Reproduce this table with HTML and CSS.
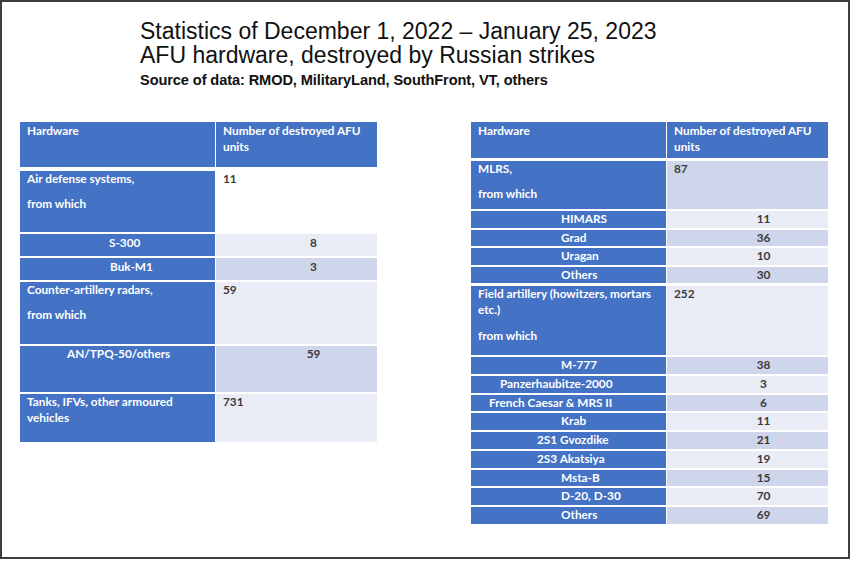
FILE: index.html
```html
<!DOCTYPE html>
<html lang="en">
<head>
<meta charset="utf-8">
<title>AFU hardware statistics</title>
<link rel="stylesheet" href="styles.css">
</head>
<body>
<div class="frame">
  <header class="title">
    <div class="t1">Statistics of December 1, 2022 – January 25, 2023</div>
    <div class="t1">AFU hardware, destroyed by Russian strikes</div>
    <div class="t3">Source of data: RMOD, MilitaryLand, SouthFront, VT, others</div>
  </header>
  <div class="tables">
    <div class="tbl">
      <div class="row head h45">
        <div class="c1">Hardware</div>
        <div class="c2">Number of destroyed AFU<br>units</div>
      </div>
      <div class="row mt4 h61">
        <div class="c1"><p>Air defense systems,</p><p class="para">from which</p></div>
        <div class="c2 white">11</div>
      </div>
      <div class="row h22">
        <div class="c1 sub pad89">S-300</div>
        <div class="c2 light num-l">8</div>
      </div>
      <div class="row h22">
        <div class="c1 sub pad90">Buk-M1</div>
        <div class="c2 dark num-l">3</div>
      </div>
      <div class="row h62">
        <div class="c1"><p>Counter-artillery radars,</p><p class="para">from which</p></div>
        <div class="c2 light">59</div>
      </div>
      <div class="row h46">
        <div class="c1 sub pad47">AN/TPQ-50/others</div>
        <div class="c2 dark num-l">59</div>
      </div>
      <div class="row h48">
        <div class="c1">Tanks, IFVs, other armoured<br>vehicles</div>
        <div class="c2 light">731</div>
      </div>
    </div>

    <div class="tbl">
      <div class="row head h36">
        <div class="c1">Hardware</div>
        <div class="c2">Number of destroyed AFU<br>units</div>
      </div>
      <div class="row mt3 h48">
        <div class="c1"><p>MLRS,</p><p class="para">from which</p></div>
        <div class="c2 dark">87</div>
      </div>
      <div class="row hs">
        <div class="c1 sub pad90">HIMARS</div>
        <div class="c2 light num-r">11</div>
      </div>
      <div class="row hs">
        <div class="c1 sub pad90">Grad</div>
        <div class="c2 dark num-r">36</div>
      </div>
      <div class="row hs">
        <div class="c1 sub pad90">Uragan</div>
        <div class="c2 light num-r">10</div>
      </div>
      <div class="row hs">
        <div class="c1 sub pad90">Others</div>
        <div class="c2 dark num-r">30</div>
      </div>
      <div class="row mt3 h69">
        <div class="c1"><p>Field artillery (howitzers, mortars<br>etc.)</p><p class="para wide">from which</p></div>
        <div class="c2 light">252</div>
      </div>
      <div class="row ht">
        <div class="c1 sub pad90">M-777</div>
        <div class="c2 dark num-r">38</div>
      </div>
      <div class="row ht">
        <div class="c1 sub pad29">Panzerhaubitze-2000</div>
        <div class="c2 light num-r">3</div>
      </div>
      <div class="row ht">
        <div class="c1 sub pad18">French Caesar &amp; MRS II</div>
        <div class="c2 dark num-r">6</div>
      </div>
      <div class="row ht">
        <div class="c1 sub pad90">Krab</div>
        <div class="c2 light num-r">11</div>
      </div>
      <div class="row ht">
        <div class="c1 sub pad66">2S1 Gvozdike</div>
        <div class="c2 dark num-r">21</div>
      </div>
      <div class="row ht">
        <div class="c1 sub pad66">2S3 Akatsiya</div>
        <div class="c2 light num-r">19</div>
      </div>
      <div class="row ht">
        <div class="c1 sub pad90">Msta-B</div>
        <div class="c2 dark num-r">15</div>
      </div>
      <div class="row ht">
        <div class="c1 sub pad90">D-20, D-30</div>
        <div class="c2 light num-r">70</div>
      </div>
      <div class="row ht">
        <div class="c1 sub pad90">Others</div>
        <div class="c2 dark num-r">69</div>
      </div>
    </div>
  </div>
</div>
</body>
</html>
```

FILE: styles.css
```css
* { box-sizing: border-box; }
html, body { margin: 0; padding: 0; background: #ffffff; }
body { width: 852px; height: 561px; overflow: hidden; }

.frame {
  width: 850px;
  height: 559px;
  border: 2px solid #3d3d3d;
  background: #ffffff;
  padding: 17px 0 0 0;
}

.title {
  padding-left: 138px;
  font-family: "Liberation Sans", Arial, sans-serif;
  color: #111111;
}
.t1 { font-size: 23px; line-height: 24px; }
.t3 { font-size: 14.6px; line-height: 22px; font-weight: bold; margin-top: 2px; letter-spacing: -0.1px; }

.tables {
  display: flex;
  gap: 94px;
  padding-left: 18px;
  margin-top: 31px;
  align-items: flex-start;
}

.tbl {
  width: 357px;
  font-family: Lato, "Noto Sans", sans-serif;
  font-size: 11.8px;
  font-weight: bold;
  line-height: 16px;
}

.row {
  display: grid;
  grid-template-columns: 195px 161px;
  column-gap: 1px;
  margin-top: 2px;
}
.row.head { margin-top: 0; }
.row.mt3 { margin-top: 3px; }
.row.mt4 { margin-top: 4px; }

.c1 {
  background: #4472c4;
  color: #ffffff;
  padding: 0 4px 0 7px;
  white-space: nowrap;
}
.c2 {
  color: #3b3b3b;
  padding: 0 4px 0 7px;
  white-space: nowrap;
}
.head .c2 { background: #4472c4; color: #ffffff; }
.head .c1, .head .c2 { padding-top: 1px; }

.white { background: #ffffff; }
.light { background: #e9ebf5; }
.dark { background: #cfd5ea; }

p { margin: 0; }
.para { margin-top: 9px; }
.para.wide { margin-top: 10px; }

.sub { padding-left: 0; }
.pad18 { padding-left: 18px; }
.pad29 { padding-left: 29px; }
.pad47 { padding-left: 47px; }
.pad66 { padding-left: 66px; }
.pad89 { padding-left: 89px; }
.pad90 { padding-left: 90px; }

.num-l { text-align: center; padding-left: 34px; padding-right: 0; }
.num-r { text-align: center; padding-left: 32px; padding-right: 0; }

.h22 .c1, .h22 .c2 { padding-top: 1px; }

.h22 { height: 22px; }
.h36 { height: 36px; }
.h45 { height: 45px; }
.h46 { height: 46px; }
.h48 { height: 48px; }
.h61 { height: 61px; }
.h62 { height: 62px; }
.h69 { height: 69px; }
.hs { height: 16.5px; }
.hs .c1, .hs .c2 { line-height: 16.5px; }
.ht { height: 16.75px; }
.ht .c1, .ht .c2 { line-height: 16.75px; }
```
